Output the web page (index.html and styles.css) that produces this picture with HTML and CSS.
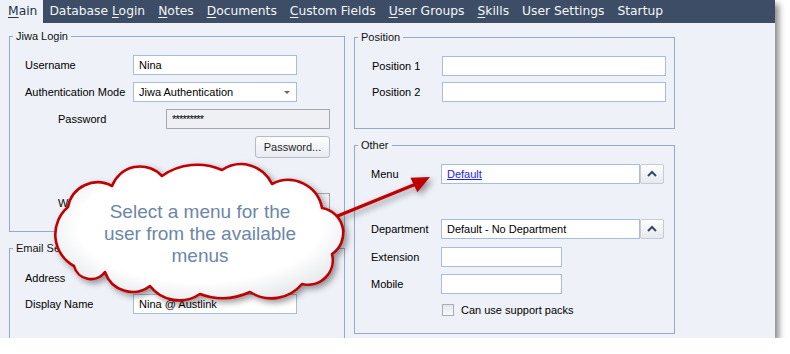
FILE: index.html
```html
<!DOCTYPE html>
<html lang="en">
<head>
    <meta charset="UTF-8">
    <meta name="viewport" content="width=device-width, initial-scale=1.0">
    <title>User Maintenance</title>
    <link rel="stylesheet" href="styles.css">
</head>
<body>
    <div class="window">
      <div class="tabs">
        <span class="tab active"><u>M</u>ain</span>
        <span class="tab">Database <u>L</u>ogin</span>
        <span class="tab"><u>N</u>otes</span>
        <span class="tab"><u>D</u>ocuments</span>
        <span class="tab"><u>C</u>ustom Fields</span>
        <span class="tab"><u>U</u>ser Groups</span>
        <span class="tab"><u>S</u>kills</span>
        <span class="tab">User Settings</span>
        <span class="tab">Startup</span>
      </div>

      <div class="page">
        <div class="col col-left">
          <fieldset class="group">
            <legend>Jiwa Login</legend>
            <div class="group_body login_body">
              <div class="row">
                <span class="label">Username</span>
                <div class="field w164">Nina</div>
              </div>
              <div class="row">
                <span class="label">Authentication Mode</span>
                <div class="field w164 select">Jiwa Authentication<i class="caret"></i></div>
              </div>
              <div class="row indent">
                <span class="label">Password</span>
                <div class="field w164 disabled">*********</div>
              </div>
              <div class="btn_row">
                <button class="btn">Password...</button>
              </div>
              <div class="row indent gap_big">
                <span class="label">W</span>
                <div class="field w164 disabled"></div>
              </div>
            </div>
          </fieldset>

          <fieldset class="group">
            <legend>Email Settings</legend>
            <div class="group_body email_body">
              <div class="row">
                <span class="label">Address</span>
                <div class="field w164"></div>
              </div>
              <div class="row">
                <span class="label">Display Name</span>
                <div class="field w164">Nina @ Austlink</div>
              </div>
            </div>
          </fieldset>
        </div>

        <div class="col col-right">
          <fieldset class="group">
            <legend>Position</legend>
            <div class="group_body position_body">
              <div class="row">
                <span class="label short">Position 1</span>
                <div class="field w224"></div>
              </div>
              <div class="row">
                <span class="label short">Position 2</span>
                <div class="field w224"></div>
              </div>
            </div>
          </fieldset>

          <fieldset class="group">
            <legend>Other</legend>
            <div class="group_body other_body">
              <div class="row">
                <span class="label short">Menu</span>
                <div class="field w199"><a class="link">Default</a></div>
                <button class="up_btn"><svg width="22" height="18" viewBox="0 0 22 18"><polyline points="7,11 11,7 15,11" fill="none" stroke="#3a4862" stroke-width="2"/></svg></button>
              </div>
              <div class="row gap_big">
                <span class="label short">Department</span>
                <div class="field w199">Default - No Department</div>
                <button class="up_btn"><svg width="22" height="18" viewBox="0 0 22 18"><polyline points="7,11 11,7 15,11" fill="none" stroke="#3a4862" stroke-width="2"/></svg></button>
              </div>
              <div class="row gap_ext">
                <span class="label short">Extension</span>
                <div class="field w121"></div>
              </div>
              <div class="row">
                <span class="label short">Mobile</span>
                <div class="field w121"></div>
              </div>
              <div class="check_row">
                <span class="check"></span>
                Can use support packs
              </div>
            </div>
          </fieldset>
        </div>
      </div>

      <!-- 提示气泡 -->
      <div class="callout">
        <svg class="callout_shape" width="400" height="150" viewBox="0 0 400 150">
          <defs>
            <radialGradient id="cloudFill" cx="50%" cy="45%" r="60%">
              <stop offset="0.7" stop-color="#ffffff"/>
              <stop offset="1" stop-color="#e4e6ea"/>
            </radialGradient>
          </defs>
          <line x1="268" y1="62" x2="366" y2="22" stroke="#c00000" stroke-width="3.5"/>
          <polygon points="380,15 367.4,30.2 360.4,15.8" fill="#c00000"/>
          <path d="M18,45 A30,30 0 0 1 62,24 A30,30 0 0 1 112,14 A61,61 0 0 1 172,8 A34,34 0 0 1 222,22 A34.5,34.5 0 0 1 272,46 A25.3,25.3 0 0 1 282,92 A24.7,24.7 0 0 1 252,122 A39.6,39.6 0 0 1 200,130 A65,65 0 0 1 150,132 A37,37 0 0 1 100,124 A29,29 0 0 1 55,110 A17.5,17.5 0 0 1 24,104 A36,36 0 0 1 18,45 Z"
                fill="url(#cloudFill)" stroke="#c00000" stroke-width="2.6" stroke-linejoin="round"/>
        </svg>
        <div class="callout_text">Select a menu for the<br>user from the available<br>menus</div>
      </div>
    </div>
</body>
</html>
```

FILE: styles.css
```css
body{
    margin: 0;
    background: #ffffff;
    font-family: "Liberation Sans", Arial, sans-serif;
    font-size: 11px;
    color: #000;
}
.window{
    position: relative;
    width: 775px;
    height: 338px;
    background: #eef1f8;
    box-shadow: 4px 4px 6px rgba(0, 0, 0, 0.45);
    overflow: hidden;
}

/* 选项卡 */
.tabs{
    display: flex;
    height: 23px;
    background: #3d4d66;
    font-family: "DejaVu Sans", sans-serif;
    font-size: 12.3px;
    line-height: 23px;
    color: #f3f5f9;
}
.tab{
    padding: 0 7px 0 6px;
}
.tab u{
    text-decoration-thickness: 1px;
    text-underline-offset: 2px;
}
.tab.active{
    background: #eef1f8;
    color: #25324a;
    padding: 0 6px 0 8px;
}

.page{
    display: flex;
    gap: 9px;
    padding: 7px 0 0 9px;
}
.col{
    display: flex;
    flex-direction: column;
    gap: 10px;
}
.col-left{
    width: 336px;
}
.col-right{
    width: 321px;
    margin-top: 1px;
}

/* 分组框 */
.group{
    margin: 0;
    padding: 0;
    border: 1px solid #97a9c8;
    min-width: 0;
}
.group legend{
    margin-left: 3px;
    padding: 0 3px;
    line-height: 13px;
    color: #111;
}
.group_body{
    display: flex;
    flex-direction: column;
    gap: 7px;
}
.login_body{
    padding: 12px 0 18px 15px;
}
.email_body{
    padding: 13px 0 60px 15px;
    gap: 6px;
}
.position_body{
    padding: 12px 0 26px 17px;
    gap: 6px;
}
.other_body{
    padding: 12px 0 17px 16px;
}

.row{
    display: flex;
    align-items: center;
    height: 20px;
}
.row.indent{
    padding-left: 33px;
}
.row.gap_big{
    margin-top: 28px;
}
.row.gap_ext{
    margin-top: 1px;
}
.label{
    width: 108px;
    flex: none;
}
.label.short{
    width: 70px;
}

.field{
    box-sizing: border-box;
    height: 20px;
    line-height: 18px;
    padding-left: 5px;
    background: #fff;
    border: 1px solid #a9bcd9;
    white-space: nowrap;
    overflow: hidden;
}
.w164{ width: 164px; }
.w224{ width: 224px; }
.w199{ width: 199px; }
.w121{ width: 121px; }

.field.select{
    position: relative;
}
.caret{
    position: absolute;
    right: 6px;
    top: 8px;
    border-left: 3px solid transparent;
    border-right: 3px solid transparent;
    border-top: 3px solid #666;
}
.field.disabled{
    background: #eef0f4;
    border-color: #a3a7ae;
    letter-spacing: -0.8px;
}
.link{
    color: #1c1cf0;
    text-decoration: underline;
}

.btn_row{
    display: flex;
    padding-left: 230px;
}
.btn{
    width: 75px;
    height: 22px;
    padding: 0;
    font-family: "Liberation Sans", Arial, sans-serif;
    font-size: 11px;
    color: #1e1e2a;
    background: linear-gradient(#fdfdfe, #e8ebf0);
    border: 1px solid #b6bcc6;
    border-radius: 3px;
}
.up_btn{
    box-sizing: border-box;
    width: 24px;
    height: 20px;
    padding: 0;
    display: flex;
    align-items: center;
    justify-content: center;
    background: linear-gradient(#fefefe, #e6e9ee);
    border: 1px solid #c7ccd4;
    border-radius: 2px;
}

.check_row{
    display: flex;
    align-items: center;
    gap: 7px;
    height: 12px;
    margin: 3px 0 0 71px;
}
.check{
    box-sizing: border-box;
    width: 12px;
    height: 12px;
    border: 1px solid #a8aeb8;
    background: linear-gradient(#e6e8ec, #f8f9fa);
}

/* 提示气泡 */
.callout{
    position: absolute;
    left: 50px;
    top: 162px;
    width: 300px;
    height: 150px;
}
.callout_shape{
    position: absolute;
    left: 0;
    top: 0;
    overflow: visible;
    filter: drop-shadow(3px 3px 3px rgba(0, 0, 0, 0.4));
}
.callout_text{
    position: absolute;
    left: 0;
    top: 39px;
    width: 300px;
    text-align: center;
    font-size: 19px;
    line-height: 22px;
    color: #6c86a8;
}
```
